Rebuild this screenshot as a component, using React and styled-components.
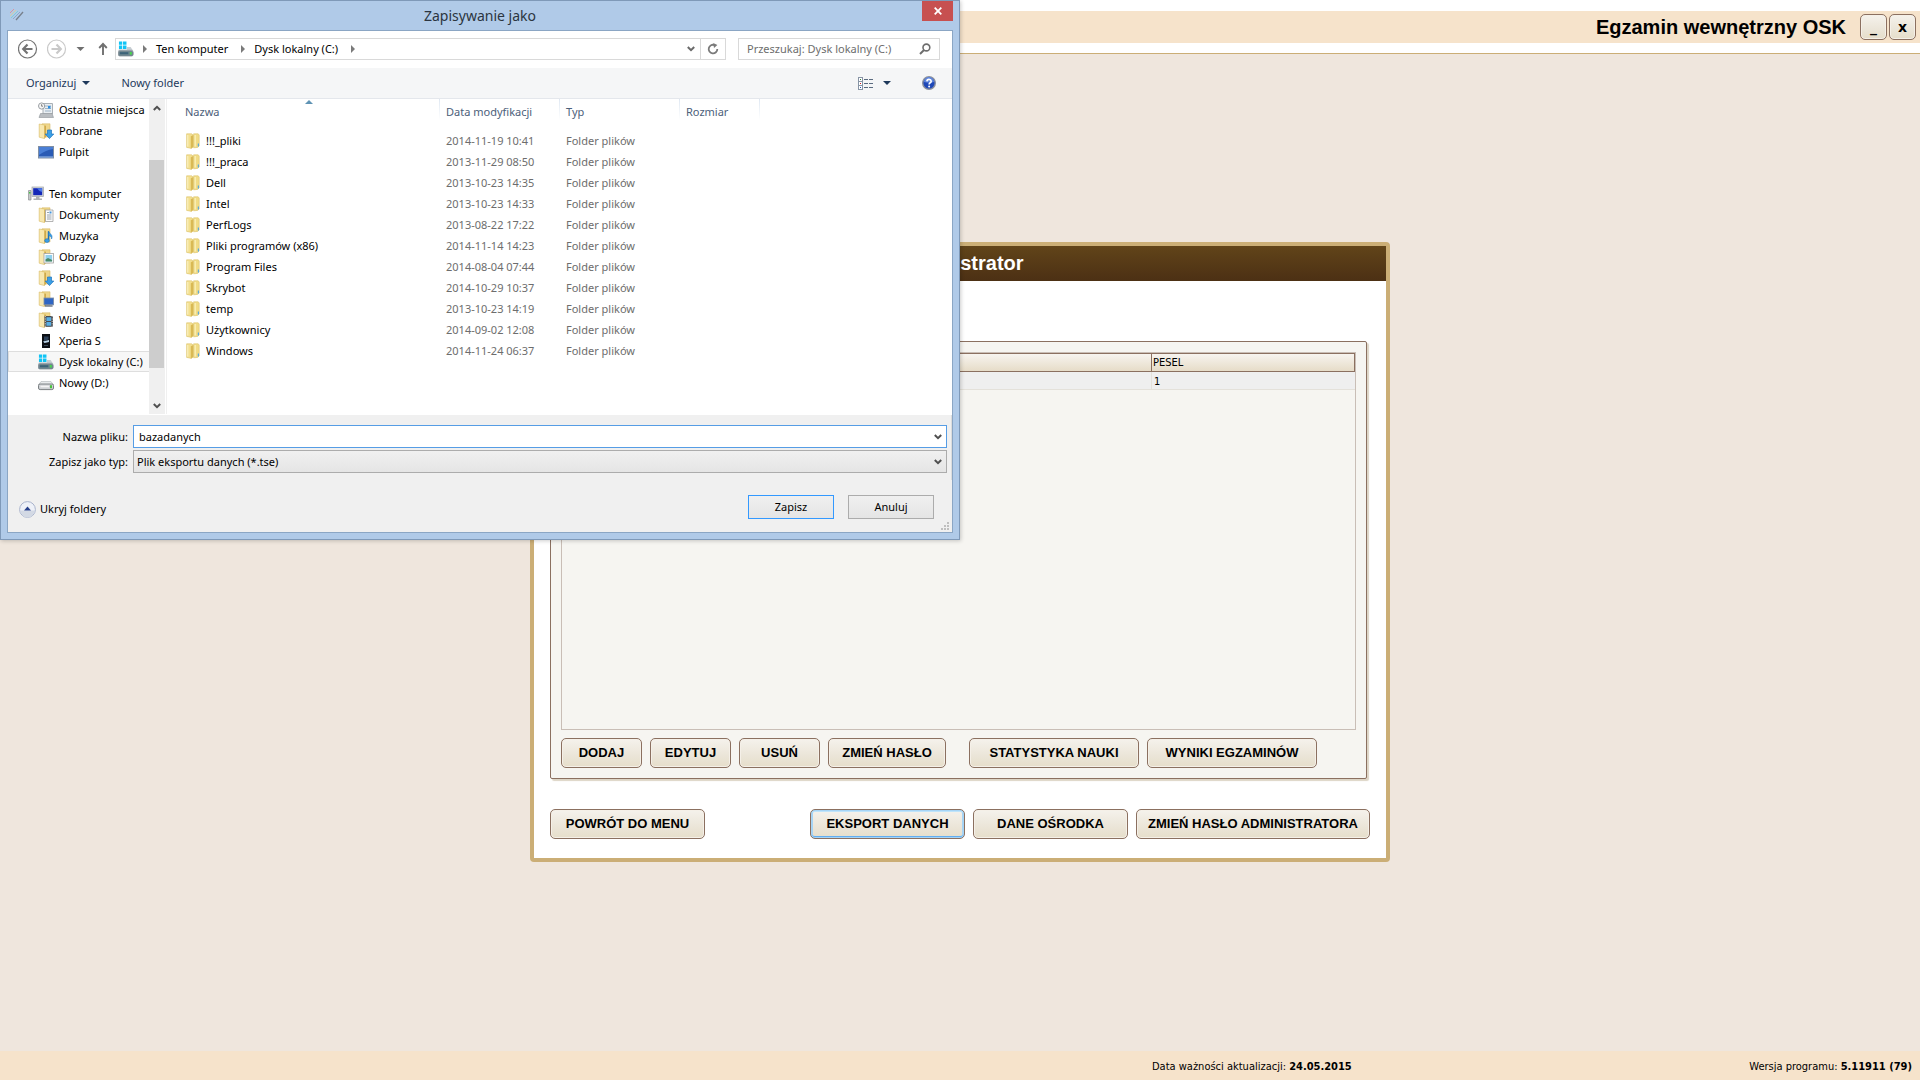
import React from "react";
import styled, { createGlobalStyle, css } from "styled-components";

const UI = `"Noto Sans", "Open Sans", sans-serif`;
const BOLD = `"Liberation Sans", Arial, sans-serif`;
const SMALL = `"DejaVu Sans Condensed", "DejaVu Sans", sans-serif`;

const GlobalStyle = createGlobalStyle`
  *, *::before, *::after { box-sizing: border-box; }
  body { margin: 0; background: #efe6dd; color: #000; }
  button, input, select { font: inherit; color: inherit; margin: 0; }
  button { padding: 0; border: 0; background: none; cursor: pointer; }
  svg { display: block; flex: none; }
  ul { list-style: none; margin: 0; padding: 0; }
`;

/* ---------- exam application ---------- */

const Screen = styled.div`
  position: relative;
  min-height: 100vh;
  display: flex;
  flex-direction: column;
`;

const TopBar = styled.header`
  background: #fff;
  padding: 11px 0 10px;
  border-bottom: 1px solid #cbae76;
`;

const TopBand = styled.div`
  display: flex;
  align-items: center;
  justify-content: flex-end;
  gap: 14px;
  height: 32px;
  padding-right: 4px;
  background: #f6e3cb;
`;

const AppTitle = styled.h1`
  margin: 0;
  font: bold 20px/24px ${BOLD};
`;

const WindowControls = styled.div`
  display: flex;
  gap: 2px;
`;

const warmFace = css`
  border: 1px solid #8b7060;
  border-radius: 5px;
  background: linear-gradient(#f5f2ec, #ebe5d8 60%, #e6deca);
  box-shadow: inset 0 0 0 1px #f5f0e8;
`;

const WindowButton = styled.button`
  ${warmFace}
  width: 27px;
  height: 26px;
  font: bold 14px/24px "DejaVu Sans", sans-serif;
`;

const Workspace = styled.main`
  flex: 1;
  display: flex;
  align-items: center;
  justify-content: center;
  padding-bottom: 1px;
`;

const Panel = styled.section`
  width: 100%;
  max-width: 860px;
  border: 4px solid #cbae76;
  border-radius: 4px;
  background: #fff;
`;

const PanelTitle = styled.h2`
  margin: 0;
  padding: 5px 4px 6px 0;
  text-align: center;
  color: #fff;
  background: linear-gradient(#614419, #4c3014);
  font: bold 20px/24px ${BOLD};
`;

const PanelBody = styled.div`
  display: flex;
  flex-direction: column;
  gap: 30px;
  padding: 60px 16px 19px;
`;

const Group = styled.div`
  display: flex;
  flex-direction: column;
  gap: 8px;
  margin-right: 3px;
  padding: 10px;
  border: 1px solid #8b7060;
  border-radius: 2px;
  background: #f6f5f1;
  box-shadow: 2px 2px 1px #ddd5c6;
`;

const TableBox = styled.div`
  min-height: 378px;
  border: 1px solid #c9beb6;
`;

const PeopleTable = styled.table`
  width: 100%;
  table-layout: fixed;
  border-collapse: separate;
  border-spacing: 0;
  font: 11px/14px ${SMALL};

  th {
    height: 19px;
    padding: 1px 1px 0;
    text-align: left;
    font-weight: normal;
    border: solid #8b7060;
    border-width: 1px 0 1px 1px;
    background: linear-gradient(#f7f4ef, #e6dcc8);
  }
  th:last-child {
    width: 204px;
    border-right-width: 1px;
  }
  td {
    height: 18px;
    padding: 2px 2px 0;
    background: #efefef;
    border: solid #e4e1da;
    border-width: 0 0 1px 1px;
  }
`;

const ButtonRow = styled.div`
  display: flex;
  gap: 8px;
`;

const Spacer = styled.span`
  flex: ${(p) => (p.$width ? `0 0 ${p.$width}` : "1")};
`;

const WarmButton = styled.button`
  ${warmFace}
  width: ${(p) => p.$width};
  height: 30px;
  font: bold 13px/16px ${BOLD};
  white-space: nowrap;
  ${(p) =>
    p.$focused &&
    css`
      box-shadow: inset 0 0 0 1px #a6d4f5, inset 0 2px 0 #bfe4fa, inset 0 -2px 0 #62aef2,
        inset 2px 0 0 #a6d4f5, inset -2px 0 0 #a6d4f5;
    `}
`;

const StatusBar = styled.footer`
  display: grid;
  grid-template-columns: 3fr 2fr;
  height: 29px;
  align-items: center;
  background: #f6e3cb;
  font: 11px/16px ${SMALL};
`;

const StatusItems = styled.div`
  grid-column: 2;
  display: flex;
  justify-content: space-between;
  padding: 2px 8px 0 0;
`;

/* ---------- save dialog ---------- */

const Dialog = styled.section`
  position: absolute;
  top: 0;
  left: 0;
  width: 50vw;
  min-width: 800px;
  padding: 0 6px 6px;
  border: 1px solid #7f99b8;
  background: #b0cae8;
  box-shadow: 1px 1px 4px rgba(0, 0, 0, 0.2);
  font: 11px/16px ${UI};
`;

const TitleBar = styled.div`
  display: grid;
  grid-template-columns: 31px 1fr 31px;
  height: 29px;
`;

const AppMark = styled.span`
  padding: 6px 2px;
`;

const DialogTitle = styled.h2`
  margin: 0;
  text-align: center;
  color: #2b3540;
  font: 14px/29px ${UI};
`;

const CloseButton = styled.button`
  display: grid;
  place-items: center;
  height: 20px;
  background: #c75050;
`;

const Client = styled.div`
  border: 1px solid #8ba6c4;
  background: #fff;
`;

const NavBar = styled.div`
  display: flex;
  gap: 12px;
  padding: 7px 12px 8px 10px;
`;

const NavLeft = styled.div`
  flex: 1;
  display: flex;
  align-items: center;
  gap: 5px;
`;

const NavButtons = styled.div`
  display: flex;
  align-items: center;
  gap: 9px;
`;

const AddressBar = styled.div`
  flex: 1;
  display: flex;
  height: 22px;
  border: 1px solid #d9d9d9;
`;

const Crumbs = styled.nav`
  flex: 1;
  display: flex;
  align-items: center;
  gap: 9px;
  padding-left: 2px;
`;

const Crumb = styled.button`
  padding-right: 4px;
`;

const AddressButton = styled.button`
  width: ${(p) => p.$width};
  display: grid;
  place-items: center;
  border-left: ${(p) => (p.$divided ? "1px solid #d9d9d9" : "0")};
`;

const SearchBox = styled.label`
  display: flex;
  align-items: center;
  width: 202px;
  height: 22px;
  padding: 0 8px;
  border: 1px solid #d9d9d9;

  input {
    flex: 1;
    min-width: 0;
    padding: 0;
    border: 0;
    outline: 0;
    background: none;
  }
  input::placeholder {
    color: #6d6d6d;
    opacity: 1;
  }
`;

const ToolBar = styled.div`
  display: flex;
  align-items: center;
  height: 31px;
  padding: 0 16px 0 18px;
  border-bottom: 1px solid #e4e7ec;
  background: #f5f6f7;
  color: #1e395b;
`;

const ToolButton = styled.button`
  display: flex;
  align-items: center;
  gap: ${(p) => p.$gap || "6px"};
  margin-right: ${(p) => p.$after || "0"};
`;

const Browser = styled.div`
  display: flex;
  border-bottom: 1px solid #fff;
`;

const Sidebar = styled.nav`
  width: 141px;
  overflow: hidden;
`;

const PlaceRow = styled.li`
  height: 21px;
`;

const PlaceButton = styled.button`
  display: flex;
  align-items: center;
  gap: 5px;
  width: 100%;
  height: 21px;
  padding-left: ${(p) => (p.$root ? "20px" : "30px")};
  white-space: nowrap;
  ${(p) =>
    p.$selected &&
    css`
      background: linear-gradient(#f7f7f7, #f7f7f7) 1px 0 no-repeat;
      box-shadow: inset 0 1px #dedede, inset 0 -1px #dedede, inset 1px 0 #dedede;
    `}
`;

const ScrollTrack = styled.div`
  display: flex;
  flex-direction: column;
  justify-content: space-between;
  width: 16px;
  padding-right: 1px;
  background: #f0f0f0;
`;

const ScrollButton = styled.button`
  display: grid;
  place-items: center;
  width: 15px;
  height: 17px;
`;

const ScrollThumb = styled.div`
  height: 208px;
  background: #cdcdcd;
`;

const ThumbLane = styled.div`
  flex: 1;
  padding-top: 44px;
`;

const FilePane = styled.div`
  flex: 1;
  margin-left: 1px;
  border-left: 1px solid #f0f0f0;
`;

const FileTable = styled.table`
  width: 100%;
  table-layout: fixed;
  border-collapse: collapse;
  color: #6d6d6d;

  th {
    position: relative;
    height: 31px;
    padding: 0 0 5px 6px;
    text-align: left;
    font-weight: normal;
    color: #4c607a;
    background: linear-gradient(#dfe8f2, #fff) right top / 1px 21px no-repeat;
  }
  th:first-child {
    padding-left: 18px;
  }
  th:last-child {
    background: none;
  }
  td {
    height: 21px;
    padding: 0 0 0 6px;
  }
`;

const NameColumn = styled.col`
  width: 273px;
`;
const MetaColumn = styled.col`
  width: 120px;
`;
const SizeColumn = styled.col`
  width: 80px;
`;

const SortMark = styled.span`
  position: absolute;
  top: 1px;
  left: calc(50% + 1px);
`;

const FileName = styled.span`
  display: flex;
  align-items: center;
  gap: 6px;
  padding-left: 13px;
  color: #000;
`;

const Fields = styled.div`
  display: grid;
  grid-template-columns: 120px 1fr;
  align-items: center;
  gap: 2px 5px;
  padding: 10px 4px 7px 0;
  border-right: 1px solid #dcdcdc;
  background: #f0f0f0;

  label {
    text-align: right;
  }
`;

const Combo = styled.div`
  position: relative;
  display: flex;
  height: 23px;
  border: 1px solid ${(p) => (p.$active ? "#569de5" : "#acacac")};
  background: ${(p) => (p.$active ? "#fff" : "linear-gradient(#f0f0f0, #e5e5e5)")};

  input,
  select {
    flex: 1;
    appearance: none;
    min-width: 0;
    padding: 0 20px 0 ${(p) => (p.$active ? "5px" : "3px")};
    border: 0;
    outline: 0;
    background: none;
  }
`;

const ComboArrow = styled.span`
  position: absolute;
  top: 8px;
  right: 4px;
  pointer-events: none;
`;

const Actions = styled.div`
  position: relative;
  display: flex;
  align-items: flex-start;
  justify-content: space-between;
  padding: 15px 18px 9px 11px;
  background: #f0f0f0;
`;

const FolderToggle = styled.button`
  display: flex;
  align-items: center;
  gap: 4px;
  height: 28px;
`;

const Choices = styled.div`
  display: flex;
  gap: 14px;
`;

const ChoiceButton = styled.button`
  width: 86px;
  height: 24px;
  padding-bottom: 1px;
  border: 1px solid ${(p) => (p.$primary ? "#3399ff" : "#acacac")};
  background: linear-gradient(#f0f0f0, #e5e5e5);
`;

const Grip = styled.span`
  position: absolute;
  right: 3px;
  bottom: 2px;
`;

/* ---------- drawings ---------- */

const Chevron = ({ up, color = "#505050" }) => (
  <svg width="8" height="6" viewBox="0 0 8 6" aria-hidden="true">
    <path d={up ? "M0.8 5 4 1.8 7.2 5" : "M0.8 1 4 4.2 7.2 1"} fill="none" stroke={color} strokeWidth="2" />
  </svg>
);

const Caret = ({ color = "#1e395b", width = 7 }) => (
  <svg width={width} height="4" viewBox="0 0 8 4" aria-hidden="true">
    <path d="M0 0H8L4 4Z" fill={color} />
  </svg>
);

const CrumbArrow = () => (
  <svg width="4" height="8" viewBox="0 0 4 8" aria-hidden="true">
    <path d="M0 0 4 4 0 8Z" fill="#7a7a7a" />
  </svg>
);

const RoundArrow = ({ forward }) => {
  const c = forward ? "#c9c9c9" : "#747474";
  return (
    <svg width="20" height="20" viewBox="0 0 20 20" aria-hidden="true">
      <circle cx="9.5" cy="10" r="9" fill="#fff" stroke={c} strokeWidth="1.2" />
      <g transform={forward ? "matrix(-1 0 0 1 19 0)" : undefined} fill="none" stroke={c} strokeWidth="2.2">
        <path d="M5 10H14.5M9.5 5.5 5.2 10 9.5 14.5" />
      </g>
    </svg>
  );
};

const UpArrow = () => (
  <svg width="16" height="14" viewBox="0 0 16 14" aria-hidden="true">
    <path d="M9 13V2.5M5.2 6 9 2 12.8 6" fill="none" stroke="#707070" strokeWidth="1.9" />
  </svg>
);

const Refresh = () => (
  <svg width="12" height="12" viewBox="0 0 12 12" aria-hidden="true">
    <path d="M7.6 2.1A4.3 4.3 0 1 0 10.3 6" fill="none" stroke="#7a7a7a" strokeWidth="1.8" />
    <path d="M6.2 0 10.4 1.9 7 5Z" fill="#7a7a7a" />
  </svg>
);

const Magnifier = () => (
  <svg width="12" height="12" viewBox="0 0 12 12" aria-hidden="true">
    <circle cx="7.4" cy="4.5" r="3.4" fill="none" stroke="#6d6d6d" strokeWidth="1.6" />
    <path d="M5 7 1 11" stroke="#6d6d6d" strokeWidth="2" />
  </svg>
);

const PencilMark = () => (
  <svg width="16" height="14" viewBox="0 0 16 14" aria-hidden="true">
    <g fill="none" strokeWidth="0.9">
      <path d="M1 6 5 2" stroke="#dc8f98" />
      <path d="M1 9 7 3" stroke="#d8cf9a" />
      <path d="M2 11 9 4" stroke="#7ccbd2" />
      <path d="M4 12 11 5" stroke="#8aa0c4" />
      <path d="M7 13 14 5" stroke="#77808c" strokeWidth="1.4" />
    </g>
  </svg>
);

const ViewMode = () => (
  <svg width="15" height="13" viewBox="0 0 15 13" shapeRendering="crispEdges" aria-hidden="true">
    {[0, 4, 8].map((y, i) => (
      <g key={y}>
        <rect x="0.5" y={y + 0.5} width="4" height="4" fill="#fff" stroke="#8794a5" />
        <rect x="2" y={y + 2} width="1" height="1" fill={["#3a7a3a", "#d02020", "#2a4fb0"][i]} />
        <path d={`M6 ${y + 2.5}H10M11 ${y + 2.5}H15`} stroke="#5b6b80" />
      </g>
    ))}
  </svg>
);

const Help = () => (
  <svg width="14" height="14" viewBox="0 0 14 14" aria-hidden="true">
    <circle cx="7" cy="7" r="6.3" fill="#1f48b8" stroke="#8c919c" strokeWidth="1.4" />
    <path d="M2 6A5 5 0 0 1 12 6Q7 7.5 2 6Z" fill="#5f86dc" />
    <path d="M4.9 5.4Q5 3.4 7 3.4T9.2 5.2Q9.2 6.3 7.9 7 7.1 7.5 7.1 8.4" fill="none" stroke="#fff" strokeWidth="1.6" />
    <circle cx="7.1" cy="10.4" r="1" fill="#fff" />
  </svg>
);

const Folder = ({ children }) => (
  <svg width="16" height="16" viewBox="0 0 16 16" aria-hidden="true">
    <path d="M4 0.8H12V14H4Z" fill="#efd68a" stroke="#d6b968" strokeWidth="0.6" />
    <path d="M1.2 1 6.5 2V15.6L1.2 14.2Z" fill="#f8e8b0" stroke="#d9bb62" strokeWidth="0.6" />
    <path d="M6.5 3 8 2.4V14L6.5 15.6Z" fill="#cfa94a" />
    {children}
  </svg>
);

const FileFolder = () => (
  <svg width="14" height="16" viewBox="0 0 14 16" aria-hidden="true">
    <path d="M0.6 0.8H5.6L7.4 2.2V13.6L5.6 15.4 0.6 14.4Z" fill="#f3df8e" stroke="#dcc26c" strokeWidth="0.6" />
    <path d="M1.8 2V13.6" stroke="#fbf3c8" />
    <path d="M4.8 3.2 7.4 2V13.8L4.8 15.4Z" fill="#d9b954" />
    <path d="M7.6 0.8H12.2L13.2 2V13L11.6 14.4 7.6 14.8Z" fill="#f1dc86" stroke="#dcc26c" strokeWidth="0.6" />
    <path d="M9.2 2V13.6" stroke="#fbf1bd" strokeWidth="1.2" />
    <path d="M12.4 10.4V13.4" stroke="#5aa9dc" strokeWidth="1.2" />
  </svg>
);

const Windrive = () => (
  <svg width="16" height="16" viewBox="0 0 17 16" aria-hidden="true">
    <path d="M1 0H4.5V3.5H1ZM5.3 0H9V3.5H5.3ZM1 4.3H4.5V8H1ZM5.3 4.3H9V8H5.3Z" fill="#10c4f5" />
    <path d="M9.5 6H13.5L16 10H9.5Z" fill="#c6cdd2" />
    <path d="M1 8.5H15L16.5 10.5H0Z" fill="#b5bfc6" />
    <rect x="0.4" y="10" width="15.7" height="5.4" rx="1.6" fill="#6f8791" stroke="#78848c" strokeWidth="0.8" />
    <path d="M2 12.5H11" stroke="#3c6378" strokeWidth="2.2" />
    <rect x="12.6" y="11.2" width="2" height="2.8" fill="#48d84a" />
  </svg>
);

const art = {
  recent: (
    <svg width="16" height="16" viewBox="0 0 16 16" aria-hidden="true">
      <path d="M5 1.5H14.5V12H5Z" fill="#e9eef2" stroke="#a9b0b6" />
      <path d="M7 4H13M7 6.5H13M7 9H13" stroke="#9db3c6" />
      <rect x="10" y="4" width="2.5" height="2.5" fill="#2f8fe0" />
      <path d="M2.5 11.5H14L15.5 15.5H1Z" fill="#b9bdc1" stroke="#8f9498" strokeWidth="0.6" />
      <circle cx="3.6" cy="4" r="3.1" fill="#f5f5f5" stroke="#9a9fa3" />
      <path d="M3.6 2.2V4.2H5" fill="none" stroke="#666" strokeWidth="0.8" />
    </svg>
  ),
  downloads: (
    <Folder>
      <path d="M9.5 7H13.5V11H15.8L11.5 15.6 7.2 11H9.5Z" fill="#3b9fe6" stroke="#1f74bb" strokeWidth="0.7" />
    </Folder>
  ),
  desktop: (
    <svg width="16" height="16" viewBox="0 0 16 16" aria-hidden="true">
      <rect x="0.5" y="2.5" width="15" height="11.5" fill="#2a5bb5" stroke="#7f8ea3" />
      <path d="M1 3H15V5Q8 6 1 11Z" fill="#4a7fd6" />
      <path d="M1 13H15" stroke="#9fc0e8" />
    </svg>
  ),
  computer: (
    <svg width="16" height="16" viewBox="0 0 16 16" aria-hidden="true">
      <path d="M0.5 4.5H3V14H0.5Z" fill="#c6c8ca" stroke="#8d9092" strokeWidth="0.7" />
      <rect x="1" y="6" width="1.5" height="1.5" fill="#42c442" />
      <rect x="4" y="1" width="11.5" height="9.5" fill="#d3d6d9" stroke="#a2a5a8" strokeWidth="0.7" />
      <rect x="5.2" y="2.2" width="9" height="7" fill="#1428b8" />
      <path d="M9 2.2H14.2V6Q11 5.5 9 2.2Z" fill="#4c78e6" />
      <path d="M8 10.5H11.5V12.5H14V14H5.5V12.5H8Z" fill="#aeb1b4" />
    </svg>
  ),
  documents: (
    <Folder>
      <path d="M7.5 3H15V14.5H7.5Z" fill="#fbfbfb" stroke="#a2a2a2" strokeWidth="0.8" />
      <path d="M9 5.5H11M9 8H13.5M9 10H13.5M9 12H13.5" stroke="#8f9aa5" strokeWidth="0.9" />
      <rect x="11.5" y="4.5" width="2" height="2" fill="#3f93dd" />
    </Folder>
  ),
  music: (
    <Folder>
      <path d="M10.5 3.5V12" stroke="#1c70b8" strokeWidth="1.4" />
      <ellipse cx="9" cy="12.6" rx="2.3" ry="1.9" fill="#3b9fe6" stroke="#1c70b8" strokeWidth="0.6" />
      <path d="M10.5 3C11 6 15.5 6 13.6 11 13.8 8.5 12 8 10.5 7.5Z" fill="#3b9fe6" stroke="#1c70b8" strokeWidth="0.5" />
    </Folder>
  ),
  pictures: (
    <Folder>
      <rect x="6" y="4.5" width="9.5" height="9.5" fill="#fbfbfb" stroke="#a2a2a2" strokeWidth="0.8" />
      <rect x="7.5" y="6" width="6.6" height="6.4" fill="#8fd0ee" />
      <path d="M7.5 12.4V10.5L10 9 14.1 11V12.4Z" fill="#4a8a6a" />
    </Folder>
  ),
  deskFolder: (
    <Folder>
      <rect x="6" y="7" width="9.6" height="6.8" fill="#2f66c4" stroke="#7f8ea3" strokeWidth="0.8" />
      <path d="M7 15H14.6" stroke="#4d5a6c" strokeWidth="1.2" />
    </Folder>
  ),
  video: (
    <Folder>
      <rect x="6.5" y="4" width="8.5" height="10.8" fill="#4a4d52" />
      <path d="M7.3 4V15M14.2 4V15" stroke="#e0e0e0" strokeWidth="0.9" strokeDasharray="1.2 1.2" />
      <path d="M8.4 5.2H13.1V9H8.4ZM8.4 10H13.1V13.8H8.4Z" fill="#58aee4" />
    </Folder>
  ),
  phone: (
    <svg width="16" height="16" viewBox="0 0 16 16" aria-hidden="true">
      <rect x="4" y="1" width="8" height="14" fill="#0c0f14" />
      <path d="M6 3.5H10.5V6.5L6 8Z" fill="#2c4058" />
      <path d="M5 8.6 11 7V9L6.5 10Z" fill="#bcd6ea" />
      <path d="M6 12.5H10" stroke="#3b4a5a" />
    </svg>
  ),
  windrive: <Windrive />,
  drive: (
    <svg width="16" height="16" viewBox="0 0 16 16" aria-hidden="true">
      <path d="M3 6.6H13L15.5 10H0.5Z" fill="#eceff1" stroke="#b3b7ba" strokeWidth="0.7" />
      <rect x="0.5" y="9" width="15" height="5.6" rx="1.6" fill="#cfd2d5" stroke="#7c8083" />
      <path d="M2.5 11.5H11" stroke="#f4f4f4" strokeWidth="1.6" />
      <rect x="12" y="10.2" width="2" height="3" fill="#48c23c" />
    </svg>
  ),
};

/* ---------- data ---------- */

const places = [
  { icon: "recent", label: "Ostatnie miejsca" },
  { icon: "downloads", label: "Pobrane" },
  { icon: "desktop", label: "Pulpit" },
  null,
  { icon: "computer", label: "Ten komputer", root: true },
  { icon: "documents", label: "Dokumenty" },
  { icon: "music", label: "Muzyka" },
  { icon: "pictures", label: "Obrazy" },
  { icon: "downloads", label: "Pobrane" },
  { icon: "deskFolder", label: "Pulpit" },
  { icon: "video", label: "Wideo" },
  { icon: "phone", label: "Xperia S" },
  { icon: "windrive", label: "Dysk lokalny (C:)", selected: true },
  { icon: "drive", label: "Nowy (D:)" },
  null,
];

const files = [
  ["!!!_pliki", "2014-11-19 10:41"],
  ["!!!_praca", "2013-11-29 08:50"],
  ["Dell", "2013-10-23 14:35"],
  ["Intel", "2013-10-23 14:33"],
  ["PerfLogs", "2013-08-22 17:22"],
  ["Pliki programów (x86)", "2014-11-14 14:23"],
  ["Program Files", "2014-08-04 07:44"],
  ["Skrybot", "2014-10-29 10:37"],
  ["temp", "2013-10-23 14:19"],
  ["Użytkownicy", "2014-09-02 12:08"],
  ["Windows", "2014-11-24 06:37"],
];

/* ---------- views ---------- */

function SaveDialog() {
  return (
    <Dialog role="dialog" aria-labelledby="save-title">
      <TitleBar>
        <AppMark>
          <PencilMark />
        </AppMark>
        <DialogTitle id="save-title">Zapisywanie jako</DialogTitle>
        <CloseButton type="button">
          <svg width="8" height="8" viewBox="0 0 8 8" aria-hidden="true">
            <path d="M0.7 0.7 7.3 7.3M7.3 0.7 0.7 7.3" stroke="#fff" strokeWidth="1.8" />
          </svg>
        </CloseButton>
      </TitleBar>
      <Client>
        <NavBar>
          <NavLeft>
            <NavButtons>
              <button type="button"><RoundArrow /></button>
              <button type="button"><RoundArrow forward /></button>
              <button type="button"><Caret color="#6f6f6f" width={9} /></button>
              <button type="button"><UpArrow /></button>
            </NavButtons>
            <AddressBar>
              <Crumbs>
                <Windrive />
                <CrumbArrow />
                <Crumb type="button">Ten komputer</Crumb>
                <CrumbArrow />
                <Crumb type="button">Dysk lokalny (C:)</Crumb>
                <CrumbArrow />
              </Crumbs>
              <AddressButton type="button" $width="18px"><Chevron color="#6a6a6a" /></AddressButton>
              <AddressButton type="button" $width="25px" $divided><Refresh /></AddressButton>
            </AddressBar>
          </NavLeft>
          <SearchBox>
            <input type="text" placeholder="Przeszukaj: Dysk lokalny (C:)" />
            <Magnifier />
          </SearchBox>
        </NavBar>
        <ToolBar>
          <ToolButton type="button" $after="31px">Organizuj <Caret width={8} /></ToolButton>
          <ToolButton type="button">Nowy folder</ToolButton>
          <Spacer />
          <ToolButton type="button" $gap="10px" $after="31px"><ViewMode /><Caret width={8} /></ToolButton>
          <ToolButton type="button"><Help /></ToolButton>
        </ToolBar>
        <Browser>
          <Sidebar>
            <ul>
              {places.map((p, i) => (
                <PlaceRow key={i}>
                  {p && (
                    <PlaceButton type="button" $root={p.root} $selected={p.selected}>
                      {art[p.icon]}
                      {p.label}
                    </PlaceButton>
                  )}
                </PlaceRow>
              ))}
            </ul>
          </Sidebar>
          <ScrollTrack>
            <ScrollButton type="button"><Chevron up /></ScrollButton>
            <ThumbLane><ScrollThumb /></ThumbLane>
            <ScrollButton type="button"><Chevron /></ScrollButton>
          </ScrollTrack>
          <FilePane>
            <FileTable>
              <colgroup>
                <NameColumn />
                <MetaColumn />
                <MetaColumn />
                <SizeColumn />
                <col />
              </colgroup>
              <thead>
                <tr>
                  <th>
                    Nazwa
                    <SortMark>
                      <svg width="8" height="4" viewBox="0 0 8 4" aria-hidden="true">
                        <path d="M4 0 8 4H0Z" fill="#5f93b4" />
                      </svg>
                    </SortMark>
                  </th>
                  <th>Data modyfikacji</th>
                  <th>Typ</th>
                  <th>Rozmiar</th>
                  <th />
                </tr>
              </thead>
              <tbody>
                {files.map(([name, date]) => (
                  <tr key={name}>
                    <td><FileName><FileFolder />{name}</FileName></td>
                    <td>{date}</td>
                    <td>Folder plików</td>
                    <td />
                    <td />
                  </tr>
                ))}
              </tbody>
            </FileTable>
          </FilePane>
        </Browser>
        <Fields>
          <label htmlFor="file-name">Nazwa pliku:</label>
          <Combo $active>
            <input id="file-name" type="text" defaultValue="bazadanych" />
            <ComboArrow><Chevron /></ComboArrow>
          </Combo>
          <label htmlFor="file-type">Zapisz jako typ:</label>
          <Combo>
            <select id="file-type" defaultValue="tse">
              <option value="tse">Plik eksportu danych (*.tse)</option>
            </select>
            <ComboArrow><Chevron /></ComboArrow>
          </Combo>
        </Fields>
        <Actions>
          <FolderToggle type="button">
            <svg width="17" height="17" viewBox="0 0 17 17" aria-hidden="true">
              <circle cx="8.5" cy="8.5" r="7.9" fill="#eef1f8" stroke="#a9b3cc" />
              <path d="M1.5 9.5H15.5A7 7 0 0 1 1.5 9.5Z" fill="#d3d9e4" />
              <path d="M8.5 5.5 12 9.5H5Z" fill="#27408b" />
            </svg>
            Ukryj foldery
          </FolderToggle>
          <Choices>
            <ChoiceButton type="button" $primary>Zapisz</ChoiceButton>
            <ChoiceButton type="button">Anuluj</ChoiceButton>
          </Choices>
          <Grip>
            <svg width="8" height="8" viewBox="0 0 8 8" aria-hidden="true">
              <path d="M6 0H8V2H6ZM3 3H5V5H3ZM6 3H8V5H6ZM0 6H2V8H0ZM3 6H5V8H3ZM6 6H8V8H6Z" fill="#bfbfbf" />
            </svg>
          </Grip>
        </Actions>
      </Client>
    </Dialog>
  );
}

export default function App() {
  return (
    <Screen>
      <GlobalStyle />
      <TopBar>
        <TopBand>
          <AppTitle>Egzamin wewnętrzny OSK</AppTitle>
          <WindowControls>
            <WindowButton type="button">_</WindowButton>
            <WindowButton type="button">x</WindowButton>
          </WindowControls>
        </TopBand>
      </TopBar>
      <Workspace>
        <Panel>
          <PanelTitle>Administrator</PanelTitle>
          <PanelBody>
            <Group>
              <TableBox>
                <PeopleTable>
                  <thead>
                    <tr>
                      <th />
                      <th>PESEL</th>
                    </tr>
                  </thead>
                  <tbody>
                    <tr>
                      <td />
                      <td>1</td>
                    </tr>
                  </tbody>
                </PeopleTable>
              </TableBox>
              <ButtonRow>
                <WarmButton type="button" $width="81px">DODAJ</WarmButton>
                <WarmButton type="button" $width="81px">EDYTUJ</WarmButton>
                <WarmButton type="button" $width="81px">USUŃ</WarmButton>
                <WarmButton type="button" $width="118px">ZMIEŃ HASŁO</WarmButton>
                <Spacer $width="7px" />
                <WarmButton type="button" $width="170px">STATYSTYKA NAUKI</WarmButton>
                <WarmButton type="button" $width="170px">WYNIKI EGZAMINÓW</WarmButton>
              </ButtonRow>
            </Group>
            <ButtonRow>
              <WarmButton type="button" $width="155px">POWRÓT DO MENU</WarmButton>
              <Spacer />
              <WarmButton type="button" $width="155px" $focused>EKSPORT DANYCH</WarmButton>
              <WarmButton type="button" $width="155px">DANE OŚRODKA</WarmButton>
              <WarmButton type="button" $width="234px">ZMIEŃ HASŁO ADMINISTRATORA</WarmButton>
            </ButtonRow>
          </PanelBody>
        </Panel>
      </Workspace>
      <StatusBar>
        <StatusItems>
          <span>Data ważności aktualizacji: <b>24.05.2015</b></span>
          <span>Wersja programu: <b>5.11911 (79)</b></span>
        </StatusItems>
      </StatusBar>
      <SaveDialog />
    </Screen>
  );
}
